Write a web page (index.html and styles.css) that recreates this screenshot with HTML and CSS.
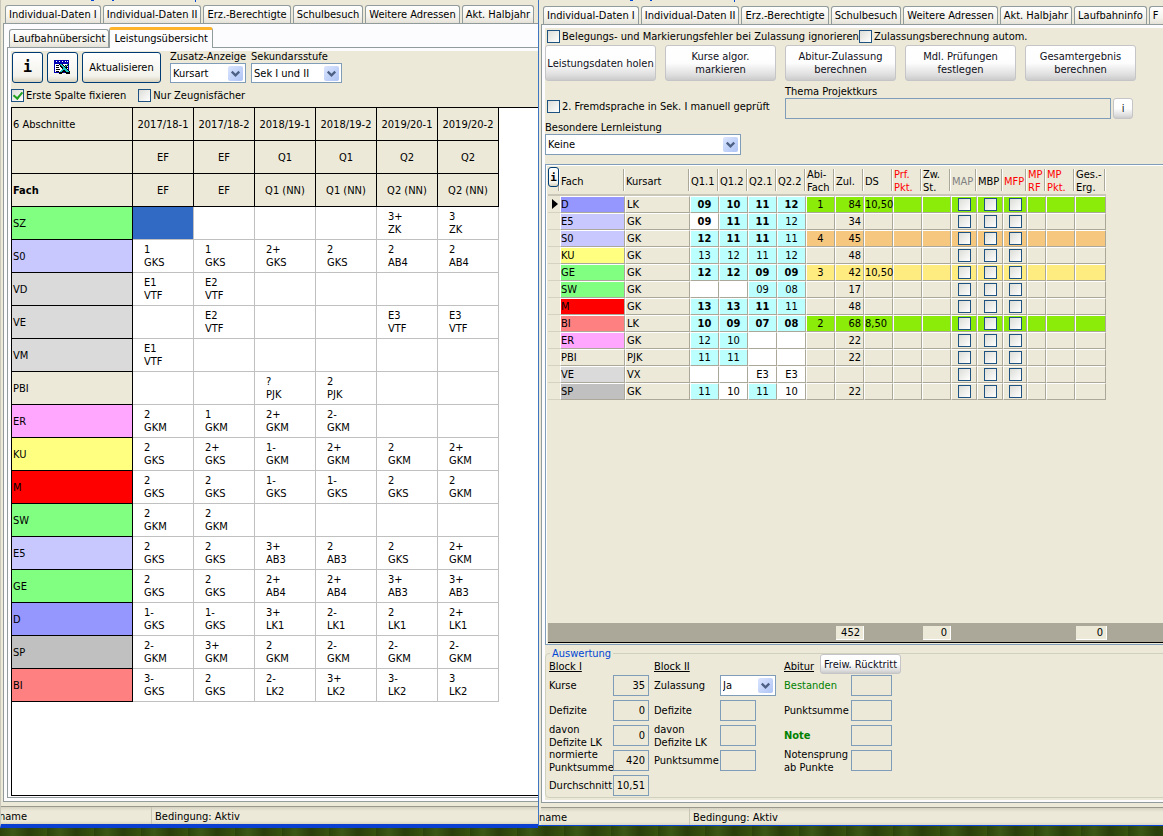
FILE: index.html
```html
<!DOCTYPE html>
<html lang="de">
<head>
<meta charset="utf-8">
<title>Leistungsübersicht und Abitur</title>
<link rel="stylesheet" href="styles.css">
</head>
<body>
<main class="desktop">
<section class="window window-left">
  <svg class="title-rest" width="400" height="5" aria-hidden="true"><path d="M90 0h3v1h-3zM111 0h2v1h-2zM194 0h1v2h-1z" fill="#0046d5"/></svg>
  <nav class="tabs">
    <button class="tab">Individual-Daten I</button><button class="tab">Individual-Daten II</button><button class="tab">Erz.-Berechtigte</button><button class="tab">Schulbesuch</button><button class="tab">Weitere Adressen</button><button class="tab">Akt. Halbjahr</button>
  </nav>
  <div class="panel">
    <nav class="tabs subtabs">
      <button class="tab">Laufbahnübersicht</button><button class="tab active">Leistungsübersicht</button>
    </nav>
    <div class="subpanel">
      <div class="toolbar">
        <button class="xp-btn square info">i</button>
        <button class="xp-btn square" aria-label="Excel-Export"><svg width="17" height="15" viewBox="0 0 17 15" shape-rendering="crispEdges"><path d="M0 0h15v13H0z" fill="#0000b4"/><path d="M1 4h13v8H1z" fill="#fff"/><path d="M2 1h1v1H2zM5 1h1v1H5zM8 1h1v1H8zM11 1h1v1h-1zM13 1h1v1h-1z" fill="#fff"/><path d="M2 5h3v1H2zM2 7h3v1H2zM2 9h4v1H2zM2 11h3v1H2zM11 5h3v1h-3zM12 7h2v1h-2z" fill="#000"/><path d="M5 4h4l2 3 2-3h2l-3 4 4 4v2h-4l-2-3-2 3H5v-2l3-3z" fill="#000"/><path d="M6 4h2l7 8h-3zM13 4h1l-6 8H6z" fill="#1cc4c4"/></svg></button>
        <button class="xp-btn refresh">Aktualisieren</button>
        <div class="field zusatz"><label for="zusatz">Zusatz-Anzeige</label><span class="combo"><select id="zusatz"><option>Kursart</option></select><svg class="arrow" viewBox="0 0 16 16"><path d="M4 6l4 4 4-4" /></svg></span></div>
        <div class="field stufe"><label for="stufe">Sekundarsstufe</label><span class="combo"><select id="stufe"><option>Sek I und II</option></select><svg class="arrow" viewBox="0 0 16 16"><path d="M4 6l4 4 4-4" /></svg></span></div>
      </div>
      <div class="options">
        <label class="check"><input type="checkbox" checked>Erste Spalte fixieren</label>
        <label class="check"><input type="checkbox">Nur Zeugnisfächer</label>
      </div>
      <div class="sheet">
        <table class="grades">
          <colgroup><col class="w-subject"><col span="6" class="w-term"></colgroup>
          <thead>
          <tr><th>6 Abschnitte</th><th>2017/18-1</th><th>2017/18-2</th><th>2018/19-1</th><th>2018/19-2</th><th>2019/20-1</th><th>2019/20-2</th></tr>
          <tr><th></th><th>EF</th><th>EF</th><th>Q1</th><th>Q1</th><th>Q2</th><th>Q2</th></tr>
          <tr><th class="strong">Fach</th><th>EF</th><th>EF</th><th>Q1 (NN)</th><th>Q1 (NN)</th><th>Q2 (NN)</th><th>Q2 (NN)</th></tr>
          </thead>
          <tbody>
          <tr><th class="green">SZ</th><td class="selected"></td><td></td><td></td><td></td><td>3+<br>ZK</td><td>3<br>ZK</td></tr>
          <tr><th class="lilac">S0</th><td>1<br>GKS</td><td>1<br>GKS</td><td>2+<br>GKS</td><td>2<br>GKS</td><td>2<br>AB4</td><td>2<br>AB4</td></tr>
          <tr><th class="light">VD</th><td>E1<br>VTF</td><td>E2<br>VTF</td><td></td><td></td><td></td><td></td></tr>
          <tr><th class="light">VE</th><td></td><td>E2<br>VTF</td><td></td><td></td><td>E3<br>VTF</td><td>E3<br>VTF</td></tr>
          <tr><th class="light">VM</th><td>E1<br>VTF</td><td></td><td></td><td></td><td></td><td></td></tr>
          <tr><th>PBI</th><td></td><td></td><td>?<br>PJK</td><td>2<br>PJK</td><td></td><td></td></tr>
          <tr><th class="pink">ER</th><td>2<br>GKM</td><td>1<br>GKM</td><td>2+<br>GKM</td><td>2-<br>GKM</td><td></td><td></td></tr>
          <tr><th class="yellow">KU</th><td>2<br>GKS</td><td>2+<br>GKS</td><td>1-<br>GKM</td><td>2+<br>GKM</td><td>2<br>GKM</td><td>2+<br>GKM</td></tr>
          <tr><th class="red">M</th><td>2<br>GKS</td><td>2<br>GKS</td><td>1-<br>GKS</td><td>1-<br>GKS</td><td>2<br>GKS</td><td>2<br>GKM</td></tr>
          <tr><th class="green">SW</th><td>2<br>GKM</td><td>2<br>GKM</td><td></td><td></td><td></td><td></td></tr>
          <tr><th class="lilac">E5</th><td>2<br>GKS</td><td>2<br>GKS</td><td>3+<br>AB3</td><td>2<br>AB3</td><td>2<br>GKS</td><td>2+<br>GKM</td></tr>
          <tr><th class="green">GE</th><td>2<br>GKS</td><td>2<br>GKS</td><td>2+<br>AB4</td><td>2+<br>AB4</td><td>3+<br>AB3</td><td>3+<br>AB3</td></tr>
          <tr><th class="blue">D</th><td>1-<br>GKS</td><td>1-<br>GKS</td><td>3+<br>LK1</td><td>2-<br>LK1</td><td>2<br>LK1</td><td>2+<br>LK1</td></tr>
          <tr><th class="gray">SP</th><td>2-<br>GKM</td><td>3+<br>GKM</td><td>2<br>GKM</td><td>2-<br>GKM</td><td>2-<br>GKM</td><td>2-<br>GKM</td></tr>
          <tr><th class="salmon">BI</th><td>3-<br>GKS</td><td>2<br>GKS</td><td>2-<br>LK2</td><td>3+<br>LK2</td><td>3-<br>LK2</td><td>3<br>LK2</td></tr>
          </tbody>
        </table>
      </div>
    </div>
  </div>
  <footer class="status"><span>name</span><span>Bedingung: Aktiv</span></footer>
</section>

<section class="window window-right">
  <svg class="title-rest" width="400" height="6" aria-hidden="true"><path d="M89 0h3v1h-3zM109 0h2v1h-2zM193 0h1v2h-1z" fill="#0046d5"/></svg>
  <nav class="tabs">
    <button class="tab">Individual-Daten I</button><button class="tab">Individual-Daten II</button><button class="tab">Erz.-Berechtigte</button><button class="tab">Schulbesuch</button><button class="tab">Weitere Adressen</button><button class="tab">Akt. Halbjahr</button><button class="tab">Laufbahninfo</button><button class="tab last">F</button>
  </nav>
  <div class="panel">
    <div class="abitur">
      <div class="options">
        <label class="check wide"><input type="checkbox">Belegungs- und Markierungsfehler bei Zulassung ignorieren</label>
        <label class="check"><input type="checkbox">Zulassungsberechnung autom.</label>
      </div>
      <div class="actions">
        <button class="soft-btn">Leistungsdaten holen</button>
        <button class="soft-btn">Kurse algor.<br>markieren</button>
        <button class="soft-btn">Abitur-Zulassung<br>berechnen</button>
        <button class="soft-btn">Mdl. Prüfungen<br>festlegen</button>
        <button class="soft-btn">Gesamtergebnis<br>berechnen</button>
      </div>
      <div class="project">
        <label class="check"><input type="checkbox">2. Fremdsprache in Sek. I manuell geprüft</label>
        <div class="field"><label for="thema">Thema Projektkurs</label><div class="with-btn"><input id="thema" class="box" type="text"><button class="soft-btn tiny">i</button></div></div>
      </div>
      <div class="field lern"><label for="lern">Besondere Lernleistung</label><span class="combo"><select id="lern"><option>Keine</option></select><svg class="arrow" viewBox="0 0 16 16"><path d="M4 6l4 4 4-4" /></svg></span></div>
      <div class="grid-frame">
        <table class="courses">
          <colgroup><col class="c12"><col class="c65"><col class="c65"><col span="9" class="c29"><col span="2" class="c26"><col class="c24"><col class="c19"><col class="c29"><col class="c31"></colgroup>
          <thead><tr><th class="corner"><button class="xp-btn mini">i</button></th><th>Fach</th><th>Kursart</th><th>Q1.1</th><th>Q1.2</th><th>Q2.1</th><th>Q2.2</th><th>Abi-<br>Fach</th><th>Zul.</th><th>DS</th><th class="alert">Prf.<br>Pkt.</th><th>Zw.<br>St.</th><th class="off">MAP</th><th>MBP</th><th class="alert">MFP</th><th class="alert">MP<br>RF</th><th class="alert">MP<br>Pkt.</th><th>Ges.-<br>Erg.</th></tr></thead>
          <tbody>
          <tr class="r-lime"><th><svg width="6" height="10" viewBox="0 0 6 10"><path d="M0 0l6 5-6 5z"/></svg></th><td class="blue">D</td><td>LK</td><td class="p b">09</td><td class="p b">10</td><td class="p b">11</td><td class="p b">12</td><td>1</td><td>84</td><td>10,50</td><td></td><td></td><td><input type="checkbox" aria-label="D MAP"></td><td><input type="checkbox" aria-label="D MBP"></td><td><input type="checkbox" aria-label="D MFP"></td><td></td><td></td><td></td></tr>
          <tr><th></th><td class="lilac">E5</td><td>GK</td><td class="w b">09</td><td class="p b">11</td><td class="p b">11</td><td class="p">12</td><td></td><td>34</td><td></td><td></td><td></td><td><input type="checkbox" aria-label="E5 MAP"></td><td><input type="checkbox" aria-label="E5 MBP"></td><td><input type="checkbox" aria-label="E5 MFP"></td><td></td><td></td><td></td></tr>
          <tr class="r-orange"><th></th><td class="lilac">S0</td><td>GK</td><td class="p b">12</td><td class="p b">11</td><td class="p b">11</td><td class="p">11</td><td>4</td><td>45</td><td></td><td></td><td></td><td><input type="checkbox" aria-label="S0 MAP"></td><td><input type="checkbox" aria-label="S0 MBP"></td><td><input type="checkbox" aria-label="S0 MFP"></td><td></td><td></td><td></td></tr>
          <tr><th></th><td class="yellow">KU</td><td>GK</td><td class="p">13</td><td class="p">12</td><td class="p">11</td><td class="p">12</td><td></td><td>48</td><td></td><td></td><td></td><td><input type="checkbox" aria-label="KU MAP"></td><td><input type="checkbox" aria-label="KU MBP"></td><td><input type="checkbox" aria-label="KU MFP"></td><td></td><td></td><td></td></tr>
          <tr class="r-yellow"><th></th><td class="green">GE</td><td>GK</td><td class="p b">12</td><td class="p b">12</td><td class="p b">09</td><td class="p b">09</td><td>3</td><td>42</td><td>10,50</td><td></td><td></td><td><input type="checkbox" aria-label="GE MAP"></td><td><input type="checkbox" aria-label="GE MBP"></td><td><input type="checkbox" aria-label="GE MFP"></td><td></td><td></td><td></td></tr>
          <tr><th></th><td class="green">SW</td><td>GK</td><td class="w"></td><td class="w"></td><td class="p">09</td><td class="p">08</td><td></td><td>17</td><td></td><td></td><td></td><td><input type="checkbox" aria-label="SW MAP"></td><td><input type="checkbox" aria-label="SW MBP"></td><td><input type="checkbox" aria-label="SW MFP"></td><td></td><td></td><td></td></tr>
          <tr><th></th><td class="red">M</td><td>GK</td><td class="p b">13</td><td class="p b">13</td><td class="p b">11</td><td class="p">11</td><td></td><td>48</td><td></td><td></td><td></td><td><input type="checkbox" aria-label="M MAP"></td><td><input type="checkbox" aria-label="M MBP"></td><td><input type="checkbox" aria-label="M MFP"></td><td></td><td></td><td></td></tr>
          <tr class="r-lime"><th></th><td class="salmon">BI</td><td>LK</td><td class="p b">10</td><td class="p b">09</td><td class="p b">07</td><td class="p b">08</td><td>2</td><td>68</td><td>8,50</td><td></td><td></td><td><input type="checkbox" aria-label="BI MAP"></td><td><input type="checkbox" aria-label="BI MBP"></td><td><input type="checkbox" aria-label="BI MFP"></td><td></td><td></td><td></td></tr>
          <tr><th></th><td class="pink">ER</td><td>GK</td><td class="p">12</td><td class="p">10</td><td class="w"></td><td class="w"></td><td></td><td>22</td><td></td><td></td><td></td><td><input type="checkbox" aria-label="ER MAP"></td><td><input type="checkbox" aria-label="ER MBP"></td><td><input type="checkbox" aria-label="ER MFP"></td><td></td><td></td><td></td></tr>
          <tr><th></th><td>PBI</td><td>PJK</td><td class="p">11</td><td class="p">11</td><td class="w"></td><td class="w"></td><td></td><td>22</td><td></td><td></td><td></td><td><input type="checkbox" aria-label="PBI MAP"></td><td><input type="checkbox" aria-label="PBI MBP"></td><td><input type="checkbox" aria-label="PBI MFP"></td><td></td><td></td><td></td></tr>
          <tr><th></th><td class="light">VE</td><td>VX</td><td class="w"></td><td class="w"></td><td class="w">E3</td><td class="w">E3</td><td></td><td></td><td></td><td></td><td></td><td><input type="checkbox" aria-label="VE MAP"></td><td><input type="checkbox" aria-label="VE MBP"></td><td><input type="checkbox" aria-label="VE MFP"></td><td></td><td></td><td></td></tr>
          <tr><th></th><td class="gray">SP</td><td>GK</td><td class="p">11</td><td class="w">10</td><td class="p">11</td><td class="w">10</td><td></td><td>22</td><td></td><td></td><td></td><td><input type="checkbox" aria-label="SP MAP"></td><td><input type="checkbox" aria-label="SP MBP"></td><td><input type="checkbox" aria-label="SP MFP"></td><td></td><td></td><td></td></tr>
          </tbody>
        </table>
        <div class="sums"><output>452</output><output>0</output><output>0</output></div>
      </div>
      <fieldset class="result">
        <legend>Auswertung</legend>
        <div class="block block-1">
          <h2>Block I</h2>
          <label for="kurse">Kurse</label><input class="box" id="kurse" value="35">
          <label for="def1">Defizite</label><input class="box" id="def1" value="0">
          <label for="lk1">davon<br>Defizite LK</label><input class="box" id="lk1" value="0">
          <label for="norm">normierte<br>Punktsumme</label><input class="box" id="norm" value="420">
          <label for="avg">Durchschnitt</label><input class="box" id="avg" value="10,51">
        </div>
        <div class="block block-2">
          <h2>Block II</h2>
          <label for="zul">Zulassung</label><span class="combo"><select id="zul"><option>Ja</option></select><svg class="arrow" viewBox="0 0 16 16"><path d="M4 6l4 4 4-4" /></svg></span>
          <label for="def2">Defizite</label><input class="box" id="def2">
          <label for="lk2">davon<br>Defizite LK</label><input class="box" id="lk2">
          <label for="sum2">Punktsumme</label><input class="box" id="sum2">
        </div>
        <div class="block block-3">
          <div class="head"><h2>Abitur</h2><button class="soft-btn retreat">Freiw. Rücktritt</button></div>
          <label class="ok" for="best">Bestanden</label><input class="box" id="best">
          <label for="sum3">Punktsumme</label><input class="box" id="sum3">
          <label class="ok strong" for="note">Note</label><input class="box" id="note">
          <label for="jump">Notensprung<br>ab Punkte</label><input class="box" id="jump">
        </div>
      </fieldset>
    </div>
  </div>
  <footer class="status"><span>name</span><span>Bedingung: Aktiv</span></footer>
</section>
</main>
</body>
</html>
```
FILE: styles.css
```css
* { box-sizing: border-box; }
body, button, input, select, table {
  font: 11px/13px "DejaVu Sans Condensed", "DejaVu Sans", sans-serif;
  color: #000;
}
body { margin: 0; background: #2f470d; overflow-x: hidden; }
button, input, select { margin: 0; padding: 0; }
h2 { margin: 0; font-size: 11px; line-height: 13px; font-weight: 400; text-decoration: underline; }
.desktop {
  display: grid;
  grid-template-columns: minmax(0, 538fr) minmax(0, 625fr);
  min-height: 100vh;
  background: repeating-linear-gradient(90deg, #2c440b 0, #3c5816 13px, #2a3f0b 29px, #38530f 47px);
}
.window { display: flex; flex-direction: column; background: #ece9d8; overflow: hidden; white-space: nowrap; }
.window-left { margin-bottom: 8px; border-bottom: 4px solid #0a3fd0; border-left: 1px solid #c9c7ba; }
.window-right { margin-bottom: 10px; border-bottom: 1px solid #0a46d8; border-left: 1px solid #3f76c4; padding-left: 2px; }
.title-rest { display: block; flex: none; }

.tabs { display: flex; gap: 2px; padding-left: 2px; }
.window-left > .tabs { padding-left: 4px; }
.tab {
  flex: none;
  height: 18px;
  padding: 0 3px;
  border: 1px solid #919b9c;
  border-bottom: 0;
  border-radius: 3px 3px 0 0;
  background: linear-gradient(#fff, #f5f4ee 60%, #e4e2d8);
}
.last { flex: 1; text-align: left; border-right: 0; border-top-right-radius: 0; }
.panel { flex: 1; display: flex; flex-direction: column; border: 1px solid #919b9c; border-right: 0; background: #fcfcfe; min-height: 0; }
.window-left .panel { margin-left: 2px; padding: 3px 0 3px 3px; }
.window-right .panel { padding: 3px 0 2px 3px; }
.subtabs { align-items: flex-end; gap: 0; }
.tab.active { height: 21px; padding: 0 4px 2px; border-top: 3px solid #ffb32a; background: #fcfcfe; margin-bottom: -1px; position: relative; }
.subpanel { flex: 1; display: flex; flex-direction: column; border: 1px solid #919b9c; border-right: 0; padding: 3px 0 1px 3px; background: #ece9d8; background-clip: content-box; }

.toolbar { display: flex; padding: 1px 0 0 1px; gap: 4px; height: 34px; }
.xp-btn { border: 1px solid #003c74; border-radius: 3px; background: linear-gradient(#fff, #f3f2eb 80%, #d8d2bf); }
.square { width: 31px; height: 31px; display: grid; place-items: center; }
.info { font: bold 15px/15px "DejaVu Sans Mono", monospace; }
.refresh { width: 79px; height: 31px; }
.field { display: flex; flex-direction: column; }
.field label { line-height: 13px; }
.zusatz { width: 76px; margin: -2px 1px 0 5px; }
.stufe { width: 91px; margin-top: -2px; }
.combo { display: grid; height: 20px; border: 1px solid #7f9db9; background: #fff; }
.combo select { grid-area: 1 / 1; appearance: none; border: 0; background: none; width: 100%; padding: 0 18px 0 2px; }
.arrow { grid-area: 1 / 1; justify-self: end; align-self: center; width: 15px; height: 15px; margin-right: 2px; border-radius: 2px; background: linear-gradient(135deg, #dbe5fe, #aec4f5); pointer-events: none; }
.arrow path { fill: none; stroke: #4d6185; stroke-width: 2.4; }
input[type="checkbox"] { appearance: none; flex: none; width: 13px; height: 13px; border: 1px solid #1d5281; background: linear-gradient(135deg, #dcdcd7, #fff); }
input[type="checkbox"]:checked { display: grid; place-items: center; }
input[type="checkbox"]:checked::before { content: ""; width: 4px; height: 7px; margin-bottom: 2px; border: solid #21a121; border-width: 0 2px 2px 0; transform: rotate(40deg); }
.options { display: flex; gap: 12px; }
.check { display: flex; align-items: center; gap: 2px; }
.subpanel .options { height: 22px; padding-top: 4px; align-items: flex-start; }

.sheet { flex: 1; border: 1px solid #000; border-right: 0; background: #fff; overflow: hidden; }
.grades { table-layout: fixed; width: 487px; border-collapse: separate; border-spacing: 0; }
.w-subject { width: 121px; }
.w-term { width: 61px; }
.grades th { height: 33px; padding: 0; font-weight: 400; background: #ece9d8; border: solid #000; border-width: 0 1px 1px 0; }
.grades th:first-child { text-align: left; padding-left: 1px; }
.grades td { height: 33px; padding: 0 0 0 11px; border: solid #c0c0c0; border-width: 0 1px 1px 0; }
.strong, .grades .strong { font-weight: 700; }
.grades .selected { background: #316ac5; }
.grades .green, .courses .green { background: #80ff80; }
.grades .lilac, .courses .lilac { background: #c8c8ff; }
.grades .light, .courses .light { background: #dadada; }
.grades .pink, .courses .pink { background: #ffa6ff; }
.grades .yellow, .courses .yellow { background: #ffff80; }
.grades .red, .courses .red { background: #f00; }
.grades .blue, .courses .blue { background: #9696ff; }
.grades .gray, .courses .gray { background: #c0c0c0; }
.grades .salmon, .courses .salmon { background: #ff8080; }

.status { flex: none; display: flex; height: 18px; margin-top: 4px; border-top: 1px solid #99978a; background: linear-gradient(#d5d2c2, #ece9d8 4px, #ece9d8 14px, #dad6c4); }
.status span { padding: 3px 0 0 3px; border-left: 1px solid #c8c5b4; }
.status span:first-child { width: 152px; padding-left: 0; border: 0; margin-left: -2px; }
.window-right .status span:first-child { width: 150px; }

.abitur { flex: 1; display: flex; flex-direction: column; background: #ece9d8; }
.abitur .options { padding: 2px 0 0 2px; gap: 0; }
.wide { width: 312px; }
.actions { display: flex; gap: 9px; padding-top: 2px; }
.soft-btn { flex: none; border: 1px solid #c5c5c8; border-radius: 3px; background: linear-gradient(#fff, #fdfdfd 50%, #dedede 85%, #cbcbcb); color: #101020; }
.actions .soft-btn { width: 111px; height: 36px; }
.project { display: flex; padding: 4px 0 0 2px; }
.project > .check { width: 238px; padding-top: 9px; }
.with-btn { display: flex; gap: 2px; }
.box { height: 21px; min-width: 0; border: 1px solid #7f9db9; border-radius: 0; background: #ece9d8; text-align: right; padding-right: 3px; }
#thema { width: 326px; text-align: left; }
.tiny { width: 20px; height: 21px; }
.lern { width: 196px; padding-top: 3px; }
.lern label { line-height: 12px; }
.lern .combo { height: 21px; }

.grid-frame { flex: 1; display: flex; flex-direction: column; justify-content: space-between; margin-top: 9px; padding: 2px 0 1px 2px; border: 1px solid #7f9db9; border-right: 0; box-shadow: inset 1px 1px #fff; }
.courses { table-layout: fixed; width: 558px; border-collapse: separate; border-spacing: 0; }
.c12 { width: 12px; } .c65 { width: 65px; } .c29 { width: 29px; } .c26 { width: 26px; } .c24 { width: 24px; } .c19 { width: 19px; } .c31 { width: 31px; }
.courses thead th { height: 29px; padding: 1px 0 0 1px; text-align: left; font-weight: 400; border: 0; border-bottom: 2px solid #cbc7b8; background: linear-gradient(90deg, transparent calc(100% - 2px), #aca899 calc(100% - 2px), #aca899 calc(100% - 1px), #fff calc(100% - 1px)) 0 2px / 100% 22px no-repeat; }
.courses thead .corner { padding: 0; vertical-align: top; }
.mini { width: 11px; height: 20px; font: bold 11px/13px "DejaVu Sans Mono", monospace; display: block; }
.courses .alert { color: #f00; }
.off { color: #808080; }
.courses tbody th { height: 17px; padding: 0; border: solid #d6d2c2; border-width: 0 0 1px; }
.courses tbody th svg { display: block; margin-left: 4px; }
.courses td { height: 17px; padding: 0; line-height: 13px; text-align: center; border: 1px solid; border-color: #fff #aca899 #aca899 #fff; }
.courses td:nth-child(2), .courses td:nth-child(3), .courses td:nth-child(10) { text-align: left; }
.courses td:nth-child(3) { padding-left: 1px; }
.courses td:nth-child(9) { text-align: right; padding-right: 2px; }
.courses td input { display: block; margin: 0 auto; }
.r-lime td { background: #8aec08; }
.r-orange td { background: #f5c77f; }
.r-yellow td { background: #ffec80; }
.courses td:nth-child(3) { background: #ece9d8; }
.courses .p { background: #bff; }
.courses .w { background: #fff; }
.b { font-weight: 700; }
.sums { display: grid; grid-template-columns: 28px 28px 31px; justify-content: start; height: 20px; padding: 3px 0 2px 288px; background: #aca899; border-bottom: 1px solid #000; }
.sums output { border: solid #fff; border-width: 0 1px 1px 0; background: #ece9d8; text-align: right; padding-right: 3px; }
.sums output:nth-child(2) { margin: 0 -59px 0 59px; }
.sums output:nth-child(3) { margin: 0 -184px 0 184px; }

.result { display: flex; min-width: 0; height: 155px; margin: 2px -4px 2px 0; padding: 0 0 0 3px; border: 1px solid #d0d0bf; border-radius: 4px; }
.result { height: 151px; }
.result legend { margin-left: 1px; padding: 0 2px; color: #0046d5; line-height: 13px; }
.block { display: grid; grid-template-rows: 11px repeat(5, 21px); row-gap: 4px; align-items: center; align-content: start; }
.block h2, .head { grid-column: 1 / -1; align-self: start; }
.block-1 { grid-template-columns: 64px 36px; margin-right: 5px; }
.block-2 { grid-template-columns: 66px 36px; margin-right: 28px; }
.block-2 .combo { width: 56px; height: 21px; }
.block-3 { grid-template-columns: 67px 41px; }
.head { display: flex; align-items: flex-start; gap: 6px; }
.retreat { width: 81px; height: 20px; margin-top: -6px; }
.ok { color: #008000; }
```
